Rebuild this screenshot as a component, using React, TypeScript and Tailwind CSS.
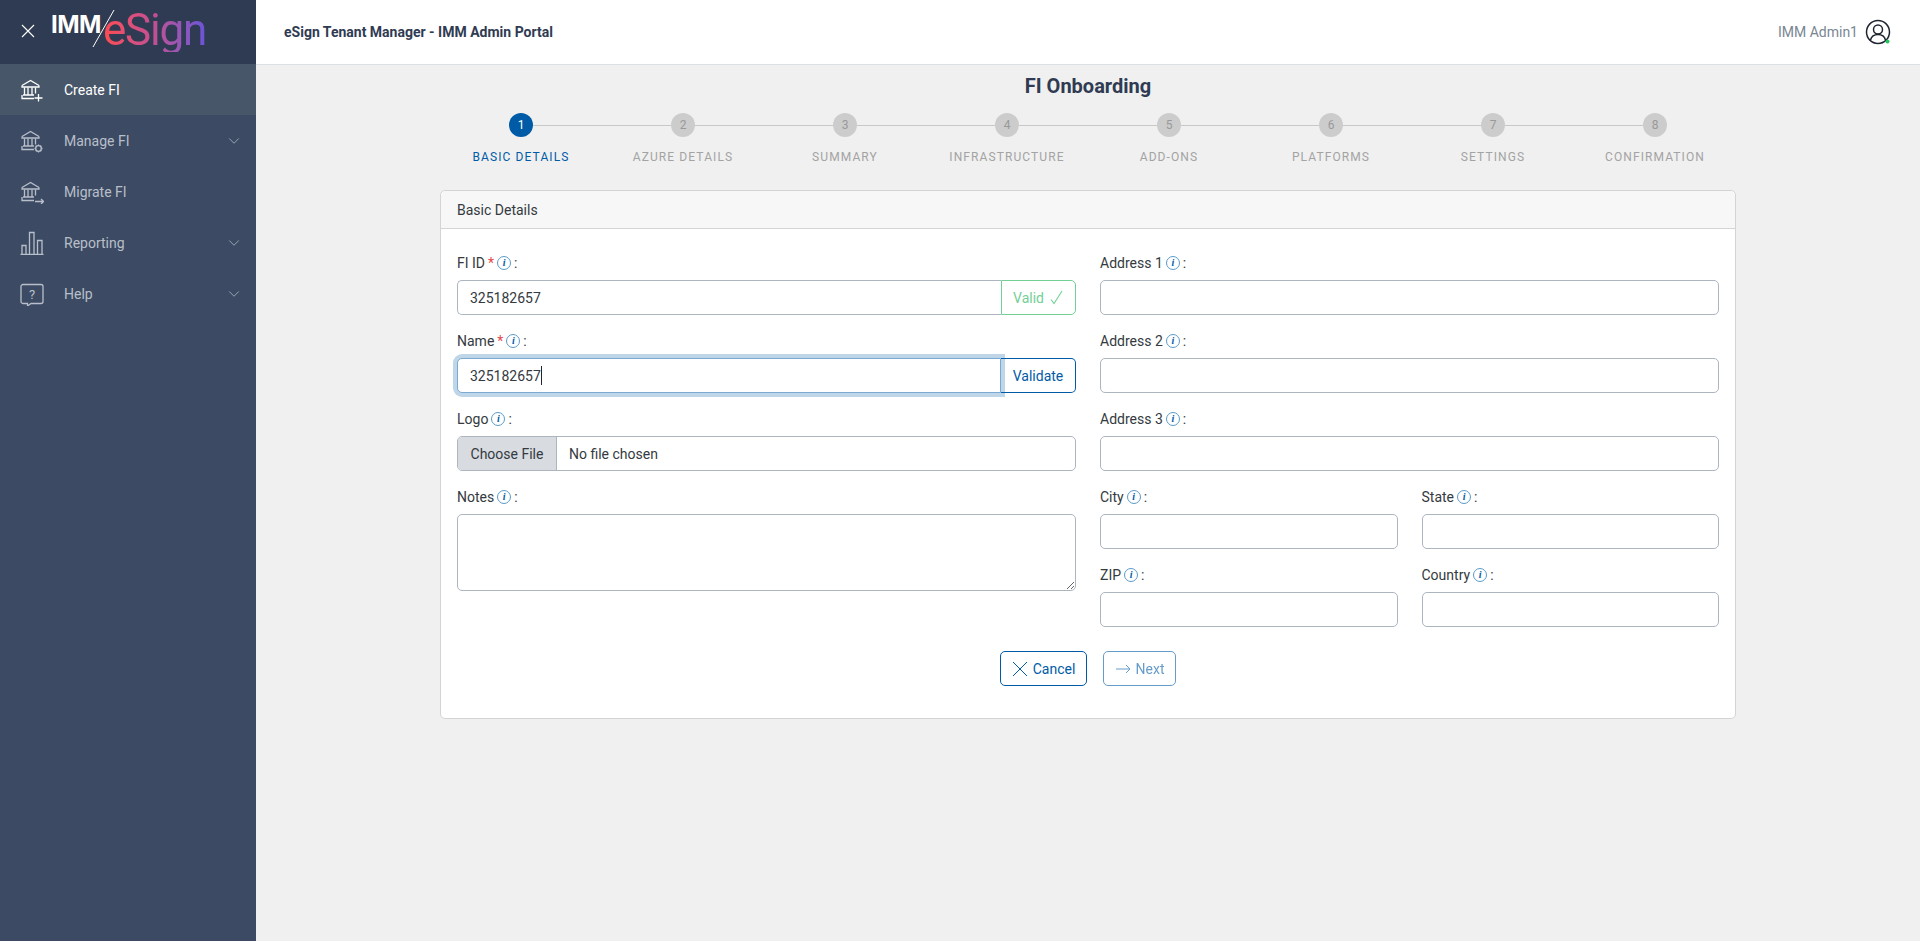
import { ChevronDown } from 'lucide-react';
import type { ReactNode } from 'react';

const BankBase = () => (
  <>
    <path d="M2 7.500 10.500 2.500 19 7.500M2 7.500v1.500h17V7.500" />
    <path d="M4.500 9.500v7.500M8 9.500v7.500M12 9.500v7.500M15.500 9.500v6M3 17h11M2 17v3.500h12" />
  </>
);

const CreateIcon = () => (
  <svg width="24" height="24" viewBox="0 0 24 24" fill="none" stroke="currentColor" strokeWidth="1.300">
    <BankBase />
    <path d="M18.500 16v7.500M14.500 20h8" />
  </svg>
);

const ManageIcon = () => (
  <svg width="24" height="24" viewBox="0 0 24 24" fill="none" stroke="currentColor" strokeWidth="1.300">
    <BankBase />
    <circle cx="18.500" cy="19.500" r="2.800" />
    <path d="M18.500 15.500v1.200M18.500 22.300v1.200M14.500 19.500h1.200M21.300 19.500h1.200M15.700 16.700l.8.8M20.500 21.500l.8.8M15.700 22.300l.8-.8M20.500 17.500l.8-.8" />
  </svg>
);

const MigrateIcon = () => (
  <svg width="24" height="24" viewBox="0 0 24 24" fill="none" stroke="currentColor" strokeWidth="1.300">
    <BankBase />
    <path d="M15 21.500h8.500M21 19l2.500 2.500L21 24" />
  </svg>
);

const ReportIcon = () => (
  <svg width="24" height="24" viewBox="0 0 24 24" fill="none" stroke="currentColor" strokeWidth="1.300">
    <path d="M0.500 23.500h23M2 23V14.500h4V23M9.500 23V1.500h4.500V23M17.500 23V9.500h4.500V23" />
  </svg>
);

const HelpIcon = () => (
  <svg width="24" height="24" viewBox="0 0 24 24" fill="none" stroke="currentColor" strokeWidth="1.300">
    <path d="M3 2.500h18a2 2 0 0 1 2 2v15a2 2 0 0 1-2 2H11l-3.500 2.500V21.500H3a2 2 0 0 1-2-2v-15a2 2 0 0 1 2-2Z" />
    <text x="12" y="16.500" textAnchor="middle" fontSize="13" fill="currentColor" stroke="none" fontFamily="Roboto, sans-serif">?</text>
  </svg>
);

const menu = [
  { label: 'Create FI', icon: <CreateIcon />, active: true },
  { label: 'Manage FI', icon: <ManageIcon />, more: true },
  { label: 'Migrate FI', icon: <MigrateIcon /> },
  { label: 'Reporting', icon: <ReportIcon />, more: true },
  { label: 'Help', icon: <HelpIcon />, more: true },
];

const steps = ['Basic Details', 'Azure Details', 'Summary', 'Infrastructure', 'Add-Ons', 'Platforms', 'Settings', 'Confirmation'];

const Info = () => (
  <span className="ml-[3px] inline-flex h-[14px] w-[14px] items-center justify-center rounded-full border border-[#5b9bc9] font-['Liberation_Serif',serif] text-[10px] font-bold italic leading-none text-[#005ba7]">
    i
  </span>
);

const Label = ({ text, required }: { text: string; required?: boolean }) => (
  <div className="flex h-[18px] items-center text-sm leading-none text-[#343a40]">
    <span>{text}</span>
    {required && <span className="ml-[3px] text-[#e5484d]">*</span>}
    <Info />
    <span className="ml-[3px]">:</span>
  </div>
);

const inputClass = 'h-[35px] w-full rounded-[5px] border border-[#adb5c0] bg-white px-3 text-sm text-[#343a40] outline-none';

const Field = ({ label }: { label: string }) => (
  <div className="flex flex-col gap-[8px]">
    <Label text={label} />
    <input className={inputClass} />
  </div>
);

const Logo = () => (
  <div className="flex items-start font-['Inter',sans-serif]">
    <span className="mt-[8px] text-[24px] font-bold leading-[34px] tracking-[-0.5px] text-white">IMM</span>
    <svg width="24" height="40" viewBox="0 0 24 40" className="mt-[9px] ml-[-9px] shrink-0" fill="none" stroke="#fff" strokeWidth="1">
      <path d="M1 38 22 1" />
    </svg>
    <span className="mt-[8px] ml-[-13px] bg-gradient-to-r from-[#ff4a4f] via-[#c04f94] to-[#6a53d8] bg-clip-text font-['Roboto',sans-serif] text-[44px] leading-[44px] tracking-[-1.2px] text-transparent">
      eSign
    </span>
  </div>
);

const Button = ({ children, className }: { children: ReactNode; className: string }) => (
  <button className={`flex h-[35px] items-center justify-center gap-[5px] rounded-[5px] border border-[#005ba7] bg-white text-sm text-[#005ba7] ${className}`}>
    {children}
  </button>
);

export default function App() {
  return (
    <div className="flex min-h-[941px] font-['Roboto',sans-serif] bg-[#f0f0f0]">
      <aside className="flex w-[256px] shrink-0 flex-col bg-[#3c4b63]">
        <div className="flex h-[64px] items-start gap-[16px] overflow-hidden bg-[#2f3b52] pl-[21px]">
          <svg width="14" height="14" viewBox="0 0 14 14" className="mt-[24px] shrink-0" stroke="#fff" strokeWidth="1.100">
            <path d="M1 1l12 12M13 1 1 13" />
          </svg>
          <Logo />
        </div>
        {menu.map(item => (
          <div key={item.label} className={`flex h-[51px] items-center pr-[13px] pl-[20px] text-sm ${item.active ? 'bg-[#485669] text-white' : 'text-[#b8bfca]'}`}>
            <span className="w-[44px] shrink-0">{item.icon}</span>
            <span className="flex-1">{item.label}</span>
            {item.more && <ChevronDown size={18} strokeWidth={1} />}
          </div>
        ))}
      </aside>

      <div className="flex min-w-0 flex-1 flex-col">
        <header className="flex h-[65px] items-center justify-between border-b border-[#dcdfe4] bg-white pr-[29px] pl-[28px]">
          <span className="text-sm font-bold text-[#2f3b52]">eSign Tenant Manager - IMM Admin Portal</span>
          <div className="flex items-center gap-[7px]">
            <span className="text-sm text-[#7a8694]">IMM Admin1</span>
            <svg width="26" height="26" viewBox="0 0 26 26" fill="none" stroke="#1f2430" strokeWidth="1.500">
              <circle cx="13" cy="13" r="11.500" />
              <circle cx="13" cy="10.500" r="4.500" />
              <path d="M5.500 21c1-4 4-5.500 7.500-5.500s6.500 1.500 7.500 5.500" />
              <circle cx="22.500" cy="22.500" r="2" fill="#22c55e" stroke="none" />
            </svg>
          </div>
        </header>

        <main className="flex flex-1 flex-col items-center">
          <h1 className="mt-[9px] h-[39px] text-[20px] font-bold leading-[24px] text-[#2f3b52]">FI Onboarding</h1>

          <div className="grid w-[1296px] grid-cols-8">
            {steps.map((step, i) => (
              <div key={step} className="flex flex-col items-center">
                <div className="flex w-full items-center">
                  <div className={`h-[1px] flex-1 ${i === 0 ? '' : 'bg-[#c8c8c8]'}`} />
                  <div className={`flex h-[24px] w-[24px] items-center justify-center rounded-full text-xs ${i === 0 ? 'bg-[#005ba7] text-white' : 'bg-[#cccccc] text-[#999999]'}`}>
                    {i + 1}
                  </div>
                  <div className={`h-[1px] flex-1 ${i === 7 ? '' : 'bg-[#c8c8c8]'}`} />
                </div>
                <span className={`mt-[12px] text-xs uppercase leading-[16px] tracking-[1.1px] ${i === 0 ? 'text-[#005ba7]' : 'text-[#a3a3a3]'}`}>{step}</span>
              </div>
            ))}
          </div>

          <section className="mt-[25px] w-[1296px] rounded-[5px] border border-[#d4d4d4] bg-white">
            <div className="flex h-[38px] items-center rounded-t-[5px] border-b border-[#d4d4d4] bg-[#f7f7f7] px-[16px] text-sm text-[#343a40]">Basic Details</div>
            <div className="px-[16px] pt-[25px] pb-[32px]">
              <div className="grid grid-cols-2 gap-x-[24px]">
                <div className="flex flex-col gap-[17px]">
                  <div className="flex flex-col gap-[8px]">
                    <Label text="FI ID" required />
                    <div className="flex h-[35px]">
                      <div className="flex min-w-0 flex-1 items-center rounded-l-[5px] border border-r-0 border-[#adb5c0] bg-white px-3 text-sm text-[#343a40]">325182657</div>
                      <div className="flex w-[75px] items-center justify-center gap-[5px] rounded-r-[5px] border border-[#74cf97] bg-white text-sm text-[#74cf97]">
                        Valid
                        <svg width="15" height="15" viewBox="0 0 15 15" fill="none" stroke="currentColor" strokeWidth="1.100">
                          <path d="M2 9.500l3 4L13 1" />
                        </svg>
                      </div>
                    </div>
                  </div>

                  <div className="flex flex-col gap-[8px]">
                    <Label text="Name" required />
                    <div className="flex h-[35px]">
                      <div className="z-10 flex min-w-0 flex-1 items-center rounded-l-[5px] border border-[#7aaad3] bg-white px-3 text-sm text-[#343a40] shadow-[0_0_0_4px_rgba(0,91,167,0.25)]">
                        325182657
                        <span className="h-[19px] w-[1px] bg-[#1f2430]" />
                      </div>
                      <div className="flex w-[75px] items-center justify-center rounded-r-[5px] border border-l-0 border-[#005ba7] bg-white text-sm text-[#005ba7]">Validate</div>
                    </div>
                  </div>

                  <div className="flex flex-col gap-[8px]">
                    <Label text="Logo" />
                    <div className="flex h-[35px] items-center overflow-hidden rounded-[5px] border border-[#adb5c0] bg-white text-sm text-[#343a40]">
                      <span className="flex h-full w-[99px] items-center justify-center border-r border-[#adb5c0] bg-[#d8dbe0]">Choose File</span>
                      <span className="ml-[12px]">No file chosen</span>
                    </div>
                  </div>

                  <div className="flex flex-col gap-[8px]">
                    <Label text="Notes" />
                    <textarea className="block h-[77px] w-full rounded-[5px] border border-[#adb5c0] bg-white px-3 py-2 text-sm outline-none" />
                  </div>
                </div>

                <div className="flex flex-col gap-[17px]">
                  <Field label="Address 1" />
                  <Field label="Address 2" />
                  <Field label="Address 3" />
                  <div className="grid grid-cols-2 gap-x-[24px] gap-y-[17px]">
                    <Field label="City" />
                    <Field label="State" />
                    <Field label="ZIP" />
                    <Field label="Country" />
                  </div>
                </div>
              </div>

              <div className="mt-[24px] flex justify-center gap-[16px]">
                <Button className="w-[87px]">
                  <svg width="16" height="16" viewBox="0 0 16 16" stroke="currentColor" strokeWidth="1">
                    <path d="M1 1l14 14M15 1 1 15" />
                  </svg>
                  Cancel
                </Button>
                <Button className="w-[73px] opacity-60">
                  <svg width="16" height="10" viewBox="0 0 16 10" fill="none" stroke="currentColor" strokeWidth="1">
                    <path d="M1 5h14M11 1l4 4-4 4" />
                  </svg>
                  Next
                </Button>
              </div>
            </div>
          </section>
        </main>
      </div>
    </div>
  );
}
